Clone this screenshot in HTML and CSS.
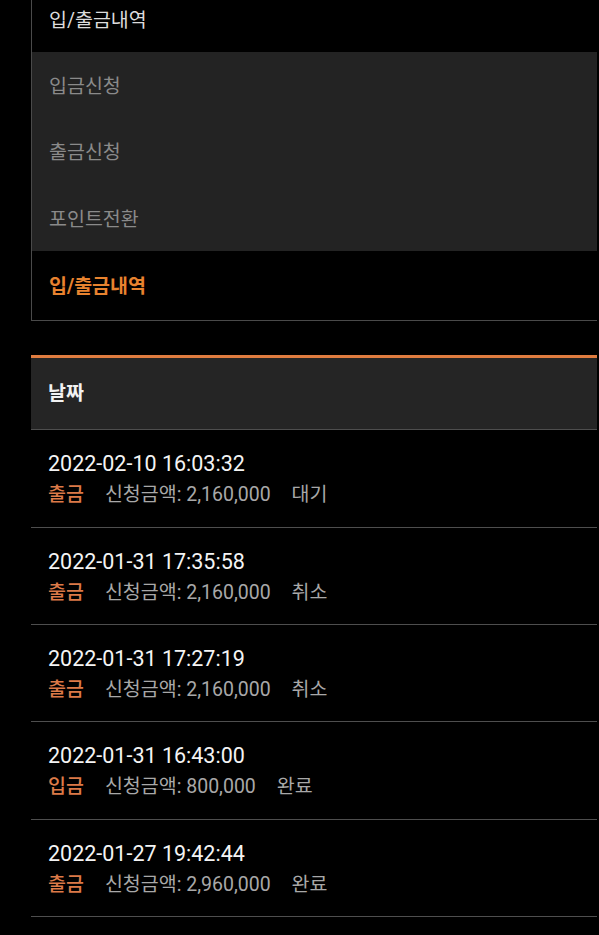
FILE: index.html
```html
<!DOCTYPE html>
<html>
    <head>
        <meta charset="utf-8">
        <meta name="viewport" content="width=device-width">
        <title>입/출금내역</title>
        <link rel="stylesheet" href="styles.css">
    </head>
    <body>
        <div id="wrap">
            <div id="menu">
                <div class="menu-title">입/출금내역</div>
                <ul class="submenu">
                    <li>입금신청</li>
                    <li>출금신청</li>
                    <li>포인트전환</li>
                </ul>
                <div class="menu-title active">입/출금내역</div>
            </div>

            <div id="history">
                <div class="head">날짜</div>
                <div class="row">
                    <div class="date">2022-02-10 16:03:32</div>
                    <div class="detail"><span class="type">출금</span><span class="amount">신청금액: 2,160,000</span><span>대기</span></div>
                </div>
                <div class="row">
                    <div class="date">2022-01-31 17:35:58</div>
                    <div class="detail"><span class="type">출금</span><span class="amount">신청금액: 2,160,000</span><span>취소</span></div>
                </div>
                <div class="row">
                    <div class="date">2022-01-31 17:27:19</div>
                    <div class="detail"><span class="type">출금</span><span class="amount">신청금액: 2,160,000</span><span>취소</span></div>
                </div>
                <div class="row">
                    <div class="date">2022-01-31 16:43:00</div>
                    <div class="detail"><span class="type">입금</span><span class="amount">신청금액: 800,000</span><span>완료</span></div>
                </div>
                <div class="row">
                    <div class="date">2022-01-27 19:42:44</div>
                    <div class="detail"><span class="type">출금</span><span class="amount">신청금액: 2,960,000</span><span>완료</span></div>
                </div>
            </div>
        </div>
    </body>
</html>
```

FILE: styles.css
```css
html, body {
    height: 100%;
}
body {
    background-color: #000;
    margin: 0;
    font-family: Roboto, "Noto Sans CJK KR", sans-serif;
    overflow: hidden;
}

#wrap {
    margin-left: 31px;
    width: 566px;
}

#menu {
    margin-top: -14px;
    border-left: 1px solid #4a4a4a;
    border-bottom: 1px solid #4a4a4a;
}

.menu-title {
    height: 64px;
    padding-top: 2px;
    line-height: 66px;
    padding-left: 17px;
    font-size: 19.5px;
    color: #dcdcdc;
}

.menu-title.active {
    height: 67px;
    line-height: 68px;
    color: #e8832f;
    font-weight: bold;
}

.submenu {
    list-style: none;
    margin: 0;
    padding: 0;
    background-color: #232323;
}

.submenu li {
    height: 64.4px;
    padding-top: 2px;
    line-height: 66px;
    padding-left: 17px;
    font-size: 19.5px;
    color: #8a8a8a;
}

#history {
    margin-top: 34px;
    border-top: 3px solid #e07c40;
}

.head {
    height: 69px;
    padding-top: 2px;
    line-height: 68px;
    padding-left: 17px;
    background-color: #252525;
    border-bottom: 1px solid #4e4e4e;
    color: #f2f2f2;
    font-size: 19.5px;
    font-weight: bold;
}

.row {
    padding: 18px 17px 15px;
    border-bottom: 1px solid #4e4e4e;
    height: 63.4px;
}

.date {
    line-height: 31px;
    font-size: 21.5px;
    color: #f4f4f4;
}

.detail {
    line-height: 32px;
    font-size: 19.5px;
    color: #a8a8a8;
}

.detail span {
    margin-right: 21px;
}

.detail .type {
    color: #dc7a48;
    font-weight: 500;
}
```
